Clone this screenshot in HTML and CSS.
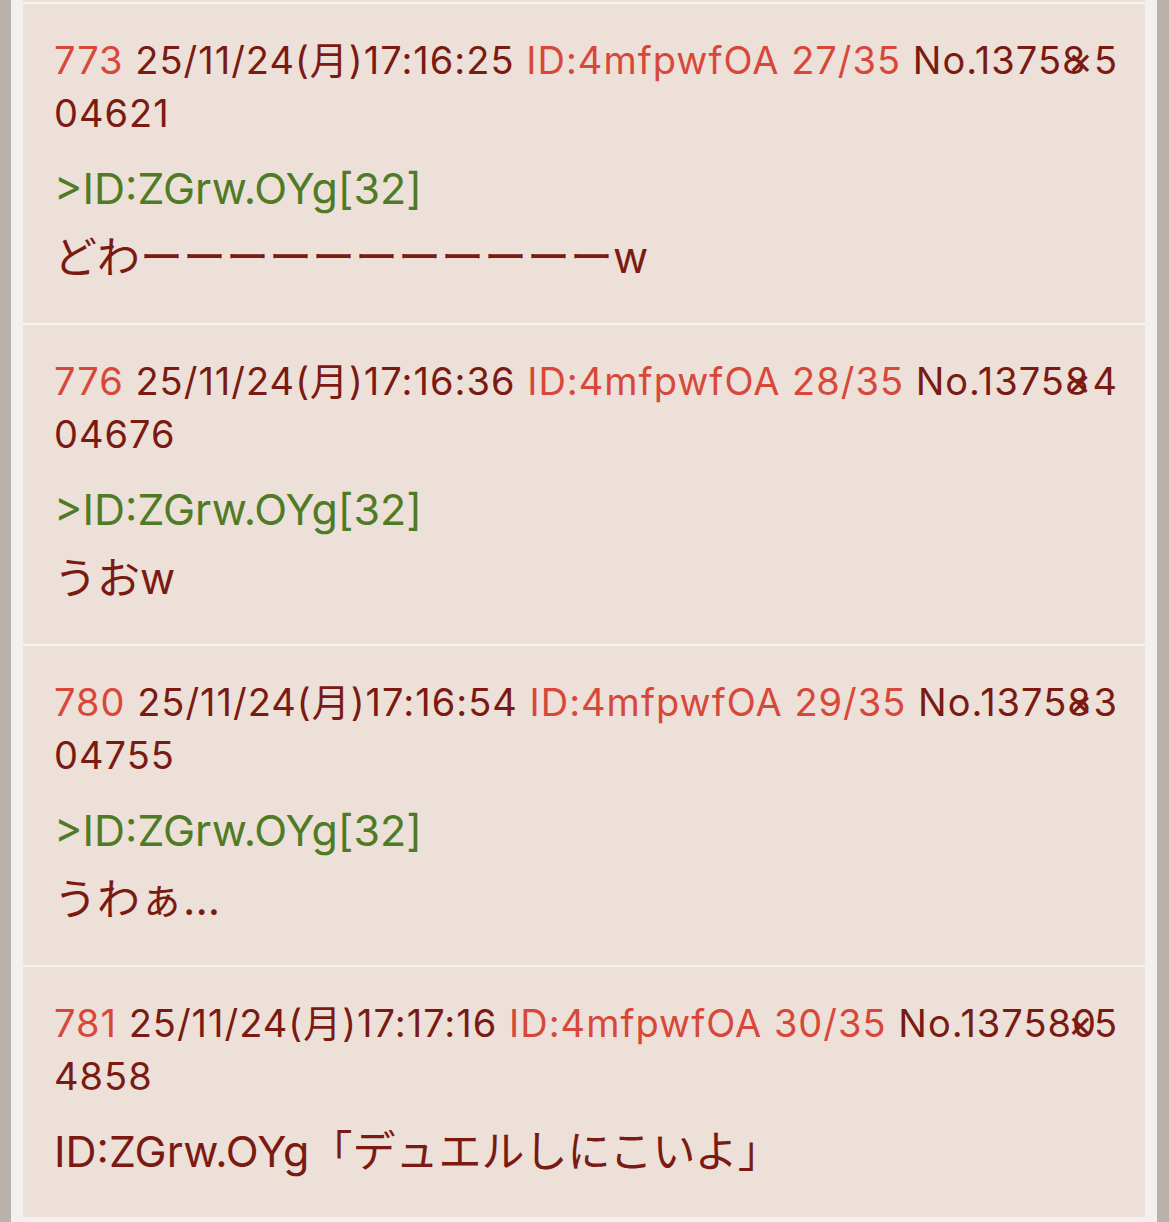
FILE: index.html
```html
<!DOCTYPE html>
<html lang="ja">
<head>
    <meta charset="UTF-8">
    <meta name="viewport" content="width=device-width, initial-scale=1.0">
    <title>レス一覧</title>
    <link rel="stylesheet" href="styles.css">
</head>
<body>
    <div class="sheet">
        <div class="thread">
            <div class="post">
                <div class="post-head"><span class="res-no">773</span> 25/11/24(月)17:16:25 <span class="res-id">ID:4mfpwfOA 27/35</span> No.1375804621</div>
                <span class="post-close">×5</span>
                <p class="quote">&gt;ID:ZGrw.OYg[32]</p>
                <p class="post-text">どわーーーーーーーーーーーw</p>
            </div>

            <div class="post">
                <div class="post-head"><span class="res-no">776</span> 25/11/24(月)17:16:36 <span class="res-id">ID:4mfpwfOA 28/35</span> No.1375804676</div>
                <span class="post-close">×4</span>
                <p class="quote">&gt;ID:ZGrw.OYg[32]</p>
                <p class="post-text">うおw</p>
            </div>

            <div class="post">
                <div class="post-head"><span class="res-no">780</span> 25/11/24(月)17:16:54 <span class="res-id">ID:4mfpwfOA 29/35</span> No.1375804755</div>
                <span class="post-close">×3</span>
                <p class="quote">&gt;ID:ZGrw.OYg[32]</p>
                <p class="post-text">うわぁ...</p>
            </div>

            <div class="post">
                <div class="post-head"><span class="res-no">781</span> 25/11/24(月)17:17:16 <span class="res-id">ID:4mfpwfOA 30/35</span> No.1375804858</div>
                <span class="post-close">×5</span>
                <p class="post-text">ID:ZGrw.OYg「デュエルしにこいよ」</p>
            </div>
        </div>
    </div>
</body>
</html>
```

FILE: styles.css
```css
/* 全体 */
body {
    margin: 0;
    background-color: #b9b1ac;
    font-family: Inter, "Noto Sans CJK JP", sans-serif;
    color: #7a1a12;
    overflow: hidden;
}

/* シート */
.sheet {
    margin: 0 12px 0 11px;
    padding: 0 12px 0 12px;
    background-color: #f3f1f0;
    min-height: 100vh;
}

.thread {
    padding-top: 2px;
    background-color: #ece0d8;
}

/* レス */
.post {
    position: relative;
    padding: 30px 40px 31px 31px;
    border-top: 2px solid #f8f3f0;
}

.post-head {
    font-size: 38px;
    line-height: 53px;
    letter-spacing: 1px;
    word-break: break-all;
}

.res-no,
.res-id {
    color: #d8483a;
}

.post-close {
    position: absolute;
    top: 30px;
    right: 27px;
    font-size: 38px;
    line-height: 53px;
    letter-spacing: 1px;
}

.quote,
.post-text {
    margin: 0;
    font-size: 43px;
    line-height: 69px;
}

.quote {
    margin-top: 14px;
    color: #4f7b26;
}

.post-head + .post-close + .post-text {
    margin-top: 14px;
}
```
